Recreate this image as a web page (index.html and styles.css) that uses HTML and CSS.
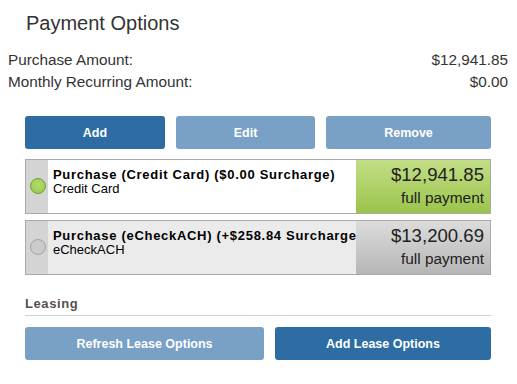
FILE: index.html
```html
<!DOCTYPE html>
<html>
<head>
<meta charset="utf-8">
<link rel="stylesheet" href="styles.css">
</head>
<body>
<h1 class="title">Payment Options</h1>
<div class="summary">
  <div class="sum-row"><span>Purchase Amount:</span><span>$12,941.85</span></div>
  <div class="sum-row"><span>Monthly Recurring Amount:</span><span>$0.00</span></div>
</div>
<div class="panel">
  <div class="actions">
    <button class="btn btn-primary">Add</button>
    <button class="btn btn-light">Edit</button>
    <button class="btn btn-light">Remove</button>
  </div>
  <div class="option selected">
    <div class="strip"><span class="dot"></span></div>
    <div class="info">
      <div class="opt-title">Purchase (Credit Card) ($0.00 Surcharge)</div>
      <div class="opt-sub">Credit Card</div>
    </div>
    <div class="amount">
      <div class="amt">$12,941.85</div>
      <div class="amt-label">full payment</div>
    </div>
  </div>
  <div class="option">
    <div class="strip"><span class="dot"></span></div>
    <div class="info">
      <div class="opt-title">Purchase (eCheckACH) (+$258.84 Surcharge)</div>
      <div class="opt-sub">eCheckACH</div>
    </div>
    <div class="amount">
      <div class="amt">$13,200.69</div>
      <div class="amt-label">full payment</div>
    </div>
  </div>
  <div class="section-head">Leasing</div>
  <div class="lease-actions">
    <button class="btn btn-light">Refresh Lease Options</button>
    <button class="btn btn-primary">Add Lease Options</button>
  </div>
</div>
</body>
</html>
```
FILE: styles.css
```css
body {
  margin: 8px;
  font-family: "Liberation Sans", Arial, sans-serif;
  color: #333;
  background: #fff;
}
.title {
  margin: 3px 0 0 18px;
  font-size: 20px;
  line-height: 24px;
  font-weight: normal;
  color: #333;
}
.summary {
  margin-top: 14px;
  padding-right: 1px;
}
.sum-row {
  display: flex;
  justify-content: space-between;
  font-size: 15.3px;
  line-height: 22px;
  color: #333;
}
.panel {
  width: 466px;
  margin: 23px 0 0 17px;
}
.actions {
  display: grid;
  grid-template-columns: 140px 139px 165px;
  column-gap: 11px;
  margin-bottom: 10px;
}
.lease-actions {
  display: grid;
  grid-template-columns: 239px 216px;
  column-gap: 11px;
}
.btn {
  height: 33px;
  border: none;
  border-radius: 3px;
  color: #fff;
  font-family: "Liberation Sans", Arial, sans-serif;
  font-weight: bold;
  font-size: 12.5px;
  padding: 0;
}
.btn-primary { background: #2e6da4; }
.btn-light { background: #79a0c5; }
.option {
  display: flex;
  height: 53px;
  border: 1px solid #aaa;
  background: #fff;
  margin-bottom: 6px;
}
.option + .option { background: #ebebeb; }
.strip {
  width: 22px;
  flex: none;
  background: #d4d4d4;
  display: flex;
  align-items: center;
  justify-content: center;
  padding: 0 0 2px 1px;
  box-sizing: border-box;
}
.dot {
  flex: none;
  display: block;
  box-sizing: border-box;
  width: 16px;
  height: 16px;
  border-radius: 50%;
  background: radial-gradient(circle at 50% 40%, #b5da6c, #96c848);
  border: 1px solid #6aa52e;
}
.option + .option .dot {
  background: #cbcbcb;
  border-color: #a3a3a3;
}
.info {
  flex: 1;
  min-width: 0;
  overflow: hidden;
  white-space: nowrap;
  padding: 8px 0 0 5px;
  color: #000;
}
.opt-title {
  font-size: 13px;
  line-height: 14px;
  font-weight: bold;
  letter-spacing: 0.7px;
}
.opt-sub {
  font-size: 13px;
  line-height: 14px;
}
.amount {
  width: 134px;
  flex: none;
  text-align: right;
  padding: 3px 6px 0 0;
  box-sizing: border-box;
  background: linear-gradient(#c3de86, #9bc44b);
  color: #222;
}
.option + .option .amount {
  background: linear-gradient(#dcdcdc, #b6b6b6);
}
.amt {
  font-size: 18.6px;
  line-height: 24px;
}
.amt-label {
  font-size: 15.4px;
  line-height: 22px;
}
.section-head {
  margin-top: 21px;
  font-size: 13px;
  line-height: 16px;
  font-weight: bold;
  letter-spacing: 0.6px;
  color: #574f4f;
  padding-bottom: 3px;
  border-bottom: 1px solid #d0d0d0;
  margin-bottom: 11px;
}
```
